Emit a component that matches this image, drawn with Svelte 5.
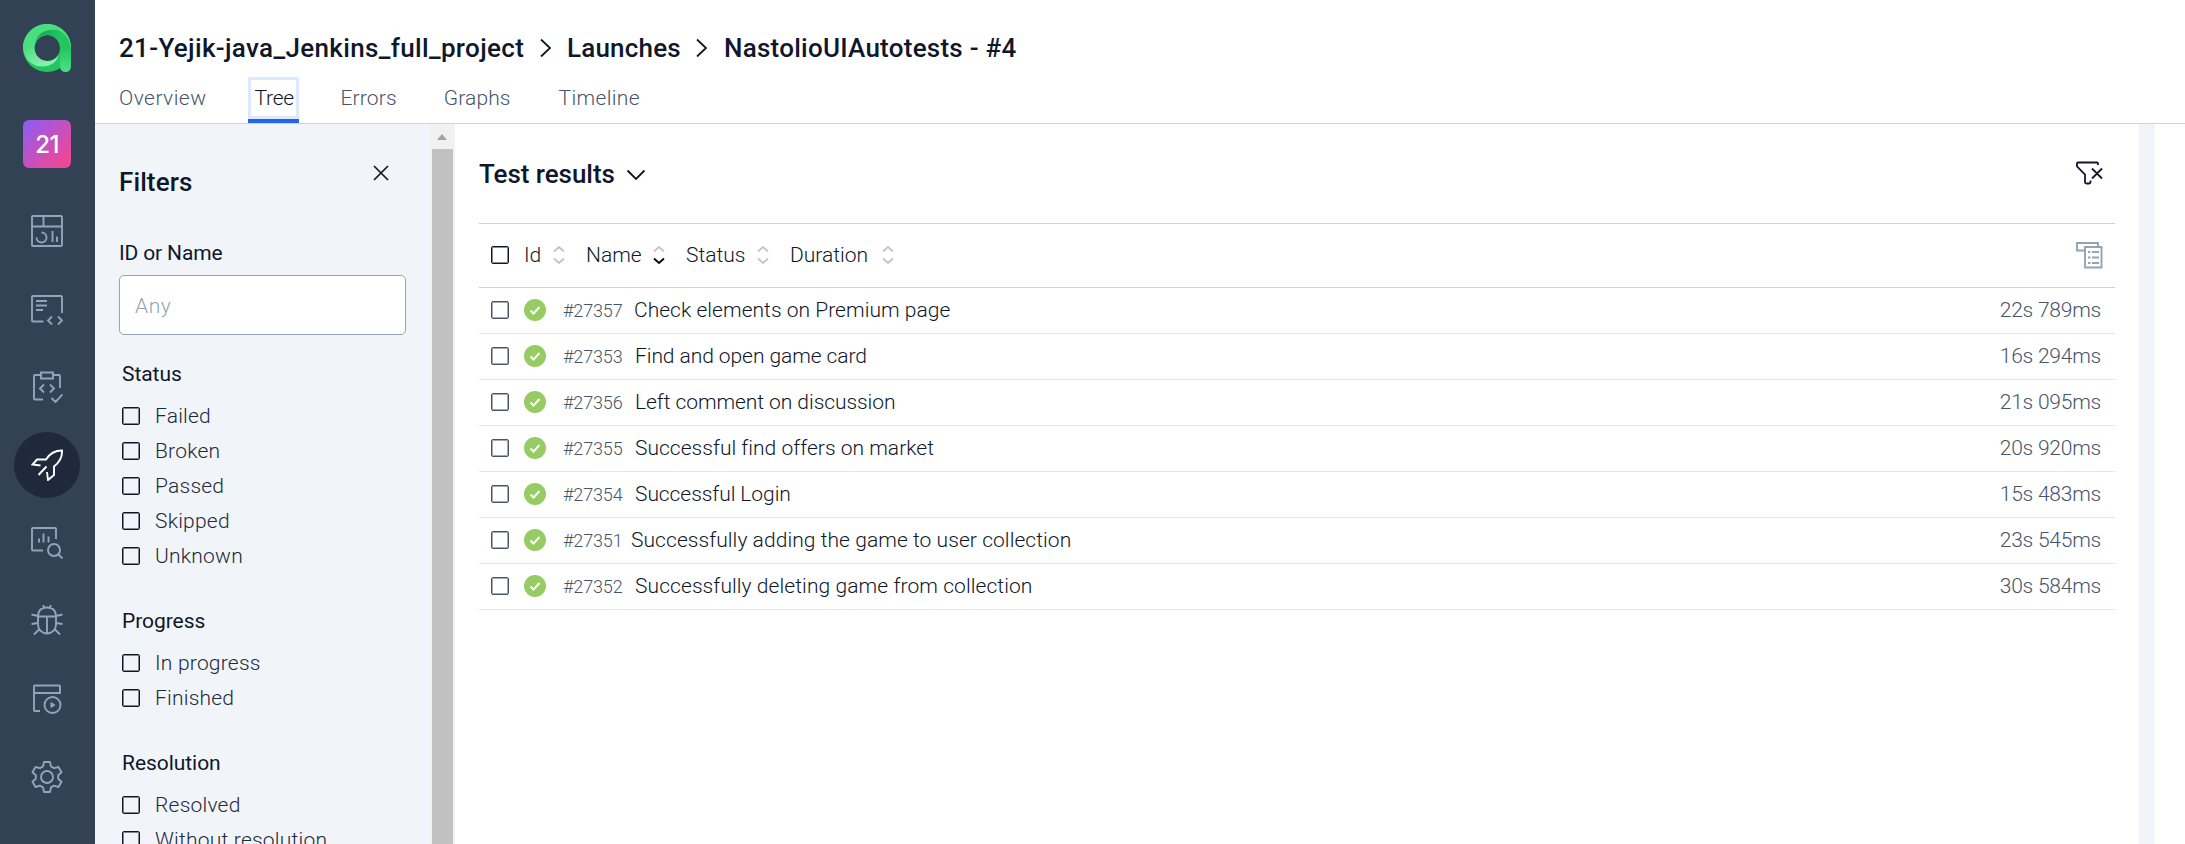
<script>
  const tabs = [
    { label: 'Overview', track: 0.45, space: 42 },
    { label: 'Tree', track: -0.2, space: 41, active: true },
    { label: 'Errors', track: 0.15, space: 47 },
    { label: 'Graphs', track: 0.12, space: 48 },
    { label: 'Timeline', track: 0.35, space: 0 }
  ];
  const groups = [
    { title: 'Status', items: ['Failed', 'Broken', 'Passed', 'Skipped', 'Unknown'] },
    { title: 'Progress', items: ['In progress', 'Finished'] },
    { title: 'Resolution', items: ['Resolved', 'Without resolution'] }
  ];
  const columns = [
    { label: 'Id', width: 62, sort: 29 },
    { label: 'Name', width: 100, sort: 67, sorted: true },
    { label: 'Status', width: 104, sort: 71 },
    { label: 'Duration', width: 104, sort: 92 }
  ];
  const rows = [
    { id: '#27357', idWidth: 71, name: 'Check elements on Premium page', track: 0.03, time: '22s 789ms' },
    { id: '#27353', idWidth: 72, name: 'Find and open game card', track: -0.07, time: '16s 294ms' },
    { id: '#27356', idWidth: 72, name: 'Left comment on discussion', track: -0.06, time: '21s 095ms' },
    { id: '#27355', idWidth: 72, name: 'Successful find offers on market', track: 0.02, time: '20s 920ms' },
    { id: '#27354', idWidth: 72, name: 'Successful Login', track: -0.07, time: '15s 483ms' },
    { id: '#27351', idWidth: 68, name: 'Successfully adding the game to user collection', track: 0.06, time: '23s 545ms' },
    { id: '#27352', idWidth: 72, name: 'Successfully deleting game from collection', track: 0.08, time: '30s 584ms' }
  ];
</script>

{#snippet chev()}
  <svg class="chev" width="14" height="22" viewBox="0 0 14 22"><path d="M2 2.500l9 8.500-9 8.500" /></svg>
{/snippet}

<div class="app">
  <aside class="rail">
    <svg class="logo" width="48" height="48" viewBox="0 0 48 48">
      <defs>
        <linearGradient id="lg1" x1="0" y1="0" x2="0.4" y2="1"><stop offset="0.5" stop-color="#4ade80" /><stop offset="1" stop-color="#86efac" /></linearGradient>
        <linearGradient id="lg2" x1="0" y1="0" x2="1" y2="0.3"><stop offset="0" stop-color="#16a34a" /><stop offset="0.7" stop-color="#22c55e" /></linearGradient>
        <linearGradient id="lg3" x1="0" y1="0" x2="0" y2="1"><stop offset="0" stop-color="#22c55e" /><stop offset="0.9" stop-color="#4ade80" /></linearGradient>
      </defs>
      <circle cx="24" cy="24" r="18.500" fill="none" stroke="#22c55e" stroke-width="11" />
      <path fill-rule="evenodd" d="M24 0C10.700 0 0 10.700 0 24c1 11 9 18.500 19 18.500 9 0 15-4.500 16.500-11.500a13 13 0 1 1-11.500-20C26 7 32 4 40 7 36 2.500 30 0 24 0z" fill="url(#lg1)" />
      <path d="M12 19C14 10.500 21 5.500 30 5.500c9 0 18 7 18 18.500l-11 0a13 13 0 0 0-25-5z" fill="url(#lg2)" />
      <path d="M24 0c8 0 15 4 19 9 3.500 4.500 5 9 5 15C46 13 39 5.500 30 5.500c-5 0-8 1-10 2z" fill="#4ade80" />
      <path d="M37 23.500h11v19a5.500 5.500 0 0 1-11 0z" fill="url(#lg3)" />
    </svg>
    <div class="project">21</div>
    <nav>
      <span class="nav"><svg viewBox="0 0 32 32"><rect x="1" y="1" width="30" height="30" rx="1" /><path d="M1 11.500h30M12.500 1v10.500M10.500 17.500a5 5 0 1 1-5 5M21.500 16v11M26 21.500V27" /></svg></span>
      <span class="nav"><svg viewBox="0 0 32 32"><path d="M12.500 28.500H2a1 1 0 0 1-1-1V4a1 1 0 0 1 1-1h28a1 1 0 0 1 1 1v16M5 8h11M5 12.500h11M5 17h7M21 23.500l-4 4 4 4M27 23.500l4 4-4 4" /></svg></span>
      <span class="nav"><svg viewBox="0 0 32 32"><path d="M10 4H4a1 1 0 0 0-1 1v22.500a1 1 0 0 0 1 1h8M22 4h6a1 1 0 0 1 1 1v12M10 1.500h12v6H10zM13 13.500l-4 4 4 4M19 13.500l4 4-4 4M20.500 27l4 4 7-7.500" /></svg></span>
      <span class="nav active"><svg viewBox="0 0 32 32"><path d="M9.500 16.500L1.500 15.500 6 10.500h9C19 4 24 1.500 31 1.500c.5 7-2 11.500-8 16V26l-6 5-1-8M15.500 17.500L7.500 26" /></svg></span>
      <span class="nav"><svg viewBox="0 0 32 32"><path d="M12 23.500H2a1 1 0 0 1-1-1V2a1 1 0 0 1 1-1h22a1 1 0 0 1 1 1v10M8 11.500v4M12.500 6.500v9M17.500 9.500v6M27 27l4.500 4.500" /><circle cx="23" cy="23" r="6" /></svg></span>
      <span class="nav"><svg viewBox="0 1 32 32"><path d="M7 12.500C7 6 11 3.500 16 3.500s9 2.500 9 9v8c0 5-4 9-9 9s-9-4-9-9zM7 12.500h18M16 12.500v17M12.500 4V1M19.500 4V1M7 12L0.500 10.500M25 12l6.500-1.500M7 19L0.500 20M25 19l6.500 1M9 24.500l-6 6M23 24.500l6 6" /></svg></span>
      <span class="nav"><svg viewBox="0 0 32 32"><path d="M9 28H4a1 1 0 0 1-1-1V3.500a1 1 0 0 1 1-1h24a1 1 0 0 1 1 1V10H3" /><circle cx="21.500" cy="22" r="8" /><path d="M20 19.500v5l4-2.500z" class="solid" /></svg></span>
      <span class="nav"><svg viewBox="0 0 32 32"><circle cx="16" cy="16" r="6" /><path d="M13 1h6l1 4.500 3 1.700L27.500 6l3 5.200-3.300 3v3.600l3.300 3-3 5.200-4.500-1.400-3 1.800L19 31h-6l-1-4.600-3-1.800L4.500 26l-3-5.200 3.300-3v-3.600l-3.300-3L4.500 6 9 7.200l3-1.700z" stroke-linejoin="round" /></svg></span>
    </nav>
  </aside>

  <div class="page">
    <header>
      <div class="crumbs">
        <span class="c1">21-Yejik-java_Jenkins_full_project</span>{@render chev()}
        <span class="c2">Launches</span>{@render chev()}
        <span class="c3">NastolioUIAutotests - #4</span>
      </div>
      <div class="tabs">
        {#each tabs as t}<span class="tab" class:active={t.active} style:letter-spacing="{t.track}px" style:margin-right="{t.space}px">{t.label}</span>{/each}
      </div>
    </header>

    <div class="body">
      <section class="filters">
        <div class="fhead">
          <h2>Filters</h2>
          <svg width="16" height="16" viewBox="0 0 16 16"><path d="M1 1l14 14M15 1L1 15" /></svg>
        </div>
        <div class="flabel">ID or Name</div>
        <div class="input">Any</div>
        {#each groups as g}
          <div class="group">
            <h3>{g.title}</h3>
            {#each g.items as item}
              <div class="opt"><i class="box"></i><span>{item}</span></div>
            {/each}
          </div>
        {/each}
      </section>
      <div class="scroll"><b></b><i></i></div>

      <main>
        <div class="mhead">
          <h2>Test results</h2>
          <svg class="down" width="20" height="12" viewBox="0 0 20 12"><path d="M1.500 1.500l8.500 8.500 8.500-8.500" /></svg>
          <svg class="funnel" width="28" height="26" viewBox="0 0 28 26"><path d="M23 5V3.500a1 1 0 0 0-1-1H3a1 1 0 0 0-1 1V6.500l8 8V22a1.500 1.500 0 0 0 1.500 1.500h2.500a1.500 1.500 0 0 0 1.500-1.500v-1.500M17 8.500l10 10M27 8.500l-10 10" /></svg>
        </div>
        <div class="thead">
          <i class="box"></i>
          <div class="cols">
            {#each columns as c}
              <span class="col" style:width="{c.width}px">
                <span style:width="{c.sort}px">{c.label}</span>
                <svg width="12" height="18" viewBox="0 0 12 18"><path d="M1 5.500L6 1l5 4.500" /><path class:on={c.sorted} d="M1 12.500L6 17l5-4.500" /></svg>
              </span>
            {/each}
          </div>
          <svg class="cfg" width="28" height="28" viewBox="0 0 28 28"><path d="M9 9.500H2V2h21v4M10 6h16.500v20.500H10zM13 11h2.500M17 11h7M13 16.500h2.500M17 16.500h7M13 22h2.500M17 22h7" /></svg>
        </div>
        {#each rows as r}
          <div class="row">
            <i class="box"></i>
            <svg class="ok" width="22" height="22" viewBox="0 0 22 22"><circle cx="11" cy="11" r="11" /><path d="M6.500 11.500l3 3 6-6.500" /></svg>
            <span class="id" style:width="{r.idWidth}px">{r.id}</span>
            <span class="name" style:letter-spacing="{r.track}px">{r.name}</span>
            <span class="time">{r.time}</span>
          </div>
        {/each}
      </main>
      <div class="edge"></div>
    </div>
  </div>
</div>

<style>
  .app { display: flex; width: 2185px; height: 844px; overflow: hidden; background: #fff; color: #0f172a; font: 300 21px/26px Roboto, sans-serif; }
  svg { fill: none; stroke: #0f172a; stroke-width: 1.8; flex: none; display: block; }
  h2 { margin: 0; font-weight: 500; font-size: 26px; line-height: 32px; }

  .rail { width: 95px; background: #334155; display: flex; flex-direction: column; align-items: center; flex: none; padding: 24px 1px 0 0; box-sizing: border-box; }
  .logo { stroke: none; }
  .project { margin-top: 48px; width: 48px; height: 48px; border-radius: 6px; background: linear-gradient(135deg, #8b5cf6, #ec4899 85%); color: #fff; font: 500 24px/50px Inter, sans-serif; letter-spacing: -0.5px; text-align: center; }
  nav { margin-top: 30px; display: flex; flex-direction: column; gap: 12px; }
  .nav { width: 66px; height: 66px; display: grid; place-items: center; border-radius: 50%; }
  .nav svg { width: 32px; height: 32px; stroke: #94a3b8; stroke-width: 1.9; }
  .nav .solid { fill: #94a3b8; stroke-width: 1; }
  .nav.active { background: #1e293b; }
  .nav.active svg { stroke: #fff; }

  .page { flex: 1; display: flex; flex-direction: column; min-width: 0; }
  header { height: 123px; border-bottom: 1px solid #cbd5e1; padding-left: 24px; }
  .crumbs { display: flex; align-items: center; height: 32px; padding-top: 32px; font-weight: 500; font-size: 26px; line-height: 32px; white-space: nowrap; }
  .c1 { width: 420px; letter-spacing: 0.34px; }
  .c2 { width: 115px; letter-spacing: 0.2px; }
  .c3 { letter-spacing: 0.25px; }
  .chev { margin-right: 14px; }
  .c2 + .chev { margin-left: 13px; margin-right: 15px; }
  .tabs { display: flex; height: 46px; margin-top: 13px; }
  .tab { color: #475569; line-height: 42px; }
  .tab.active { box-sizing: border-box; width: 51px; color: #0f172a; border: 3px solid #dbeafe; border-bottom: 0; box-shadow: inset 0 -4px #2563eb, inset 0 -7px #dbeafe; padding-left: 3px; line-height: 36px; position: relative; }
  .tab.active::after { content: ''; position: absolute; left: -3px; right: -3px; bottom: 0; height: 4px; background: #2563eb; }

  .body { flex: 1; display: flex; min-height: 0; }
  .filters { width: 335px; box-sizing: border-box; background: #f1f5f9; overflow: hidden; padding: 41px 24px 0; flex: none; }
  .fhead { display: flex; justify-content: space-between; align-items: flex-start; height: 75px; letter-spacing: 0.1px; }
  .fhead h2 { padding-top: 1px; }
  .fhead svg { margin: 0 17px 0 0; stroke-width: 1.7; }
  .flabel { font-weight: 400; line-height: 26px; padding-bottom: 9px; letter-spacing: -0.15px; }
  .input { height: 58px; border: 1px solid #94a3b8; border-radius: 5px; background: #fff; color: #94a3b8; padding-left: 15px; line-height: 60px; letter-spacing: 0.6px; }
  .group { padding: 26px 0 0 3px; }
  .group + .group { padding-top: 34.500px; }
  h3 { margin: 0 0 11.500px; font-weight: 400; font-size: 21px; line-height: 26px; letter-spacing: -0.05px; }
  .opt { height: 35px; display: flex; align-items: center; gap: 15px; letter-spacing: 0.22px; color: #1e293b; }
  .box { width: 16px; height: 16px; border: 1px solid #0f172a; border-radius: 2px; flex: none; box-shadow: inset 0 0 0 1px rgba(15, 23, 42, 0.5); }

  .scroll { width: 25px; background: #f1f1f1; display: flex; flex-direction: column; align-items: center; flex: none; box-sizing: border-box; padding-right: 1px; }
  .scroll b { border: 5.500px solid transparent; border-top: 0; border-bottom: 6px solid #a3a3a3; margin: 10px 0 9px; }
  .scroll i { width: 21px; flex: 1; background: #c1c1c1; }

  main { flex: 1; padding: 0 24px; min-width: 0; }
  .mhead { display: flex; align-items: center; height: 99px; border-bottom: 1px solid #cbd5e1; }
  .mhead h2 { width: 147px; letter-spacing: -0.05px; }
  .down { margin-top: 3px; }
  .funnel { margin: 0 12px 2px auto; }
  .thead { display: flex; align-items: center; height: 61px; border-bottom: 1px solid #cbd5e1; padding: 0 0 2px 12px; }
  .cols { display: flex; padding-left: 15px; }
  .col { display: flex; align-items: center; }
  .col svg { stroke: #c4c4c4; stroke-width: 1.8; }
  .col .on { stroke: #000; }
  .cfg { margin: 0 12px 0 auto; stroke: #94a3b8; stroke-width: 1.9; }
  .row { display: flex; align-items: center; height: 43px; border-bottom: 1px solid #e2e8f0; padding: 0 14px 2px 12px; }
  .row .box { border-color: #475569; box-shadow: inset 0 0 0 1px rgba(71, 85, 105, 0.5); }
  .ok { margin: 0 17px 0 15px; stroke: #fff; stroke-width: 2; }
  .ok circle { fill: #97cc64; stroke: none; }
  .id { font-size: 18px; color: #475569; padding-top: 3px; letter-spacing: -0.15px; }
  .time { margin-left: auto; color: #475569; letter-spacing: -0.22px; }
  .edge { width: 16px; margin-right: 30px; background: #f1f5f9; flex: none; }
</style>
